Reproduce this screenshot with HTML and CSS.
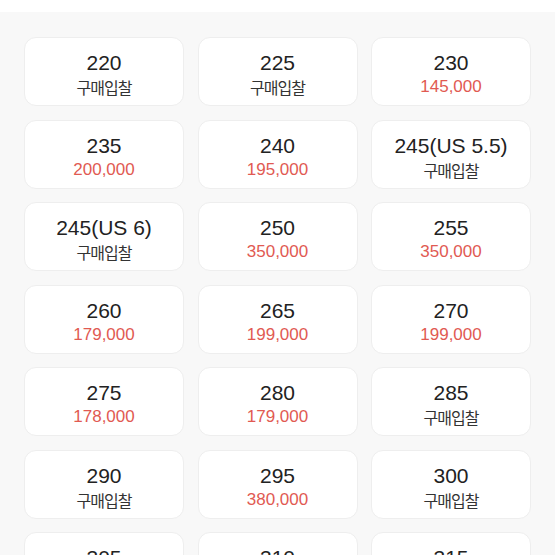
FILE: index.html
```html
<!DOCTYPE html>
<html lang="ko"><head>
<meta charset="utf-8">
<title>사이즈 선택</title>
<link rel="stylesheet" href="styles.css">
</head><body>
<div class="top"></div>
<div class="sizes">
<div class="size"><span class="num">220</span><span class="bid">구매입찰</span></div>
<div class="size"><span class="num">225</span><span class="bid">구매입찰</span></div>
<div class="size"><span class="num">230</span><span class="price">145,000</span></div>
<div class="size"><span class="num">235</span><span class="price">200,000</span></div>
<div class="size"><span class="num">240</span><span class="price">195,000</span></div>
<div class="size"><span class="num">245(US 5.5)</span><span class="bid">구매입찰</span></div>
<div class="size"><span class="num">245(US 6)</span><span class="bid">구매입찰</span></div>
<div class="size"><span class="num">250</span><span class="price">350,000</span></div>
<div class="size"><span class="num">255</span><span class="price">350,000</span></div>
<div class="size"><span class="num">260</span><span class="price">179,000</span></div>
<div class="size"><span class="num">265</span><span class="price">199,000</span></div>
<div class="size"><span class="num">270</span><span class="price">199,000</span></div>
<div class="size"><span class="num">275</span><span class="price">178,000</span></div>
<div class="size"><span class="num">280</span><span class="price">179,000</span></div>
<div class="size"><span class="num">285</span><span class="bid">구매입찰</span></div>
<div class="size"><span class="num">290</span><span class="bid">구매입찰</span></div>
<div class="size"><span class="num">295</span><span class="price">380,000</span></div>
<div class="size"><span class="num">300</span><span class="bid">구매입찰</span></div>
<div class="size"><span class="num">305</span><span class="bid">구매입찰</span></div>
<div class="size"><span class="num">310</span><span class="bid">구매입찰</span></div>
<div class="size"><span class="num">315</span><span class="bid">구매입찰</span></div>
</div>
</body></html>
```
FILE: styles.css
```css
html, body {
	margin: 0;
	height: 100%;
	overflow: hidden;
}

body {
	background: #f8f8f8;
	font-family: "Liberation Sans", "Noto Sans CJK KR", sans-serif;
	color: #222;
}

.top {
	height: 12px;
	background: #fff;
}

.sizes {
	display: grid;
	grid-template-columns: repeat(3, 1fr);
	column-gap: 13.5px;
	row-gap: 13.5px;
	padding: 25px 24px;
}

.size {
	box-sizing: border-box;
	height: 69px;
	padding-top: 13px;
	display: flex;
	flex-direction: column;
	align-items: center;
	background: #fff;
	border: 1px solid #eeeeee;
	border-radius: 12px;
}

.num {
	font-size: 21px;
	line-height: 24px;
}

.price {
	margin-top: 2px;
	font-size: 17px;
	line-height: 20px;
	color: #e15a52;
}

.bid {
	margin-top: 1px;
	font-family: "Noto Sans CJK KR", sans-serif;
	font-size: 16px;
	line-height: 22px;
	letter-spacing: -1px;
	color: #333;
}
```
